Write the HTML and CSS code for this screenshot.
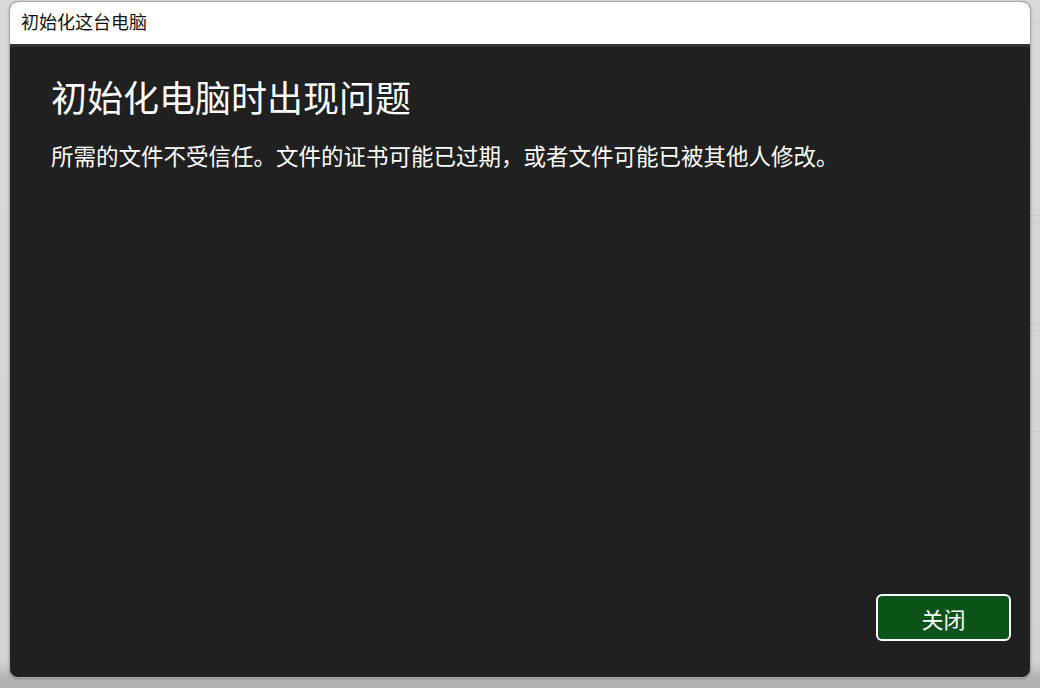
FILE: index.html
```html
<!DOCTYPE html>
<html lang="zh-Hans">
<head>
    <meta charset="UTF-8">
    <meta name="viewport" content="width=device-width, initial-scale=1.0">
    <title>初始化这台电脑</title>
    <link rel="stylesheet" href="styles.css">
</head>
<body>
    <div class="desk">
        <div class="window">
            <div class="title-bar">
                <span class="title">初始化这台电脑</span>
            </div>
            <div class="content">
                <h1>初始化电脑时出现问题</h1>
                <p>所需的文件不受信任。文件的证书可能已过期，或者文件可能已被其他人修改。</p>
                <div class="actions">
                    <button class="close-btn">关闭</button>
                </div>
            </div>
        </div>
    </div>
</body>
</html>
```

FILE: styles.css
```css
html, body {
    margin: 0;
    height: 100%;
}

body {
    font-family: "Noto Sans CJK SC", "Noto Sans", sans-serif;
    background:
        linear-gradient(#c9c9c9, #c9c9c9) right 0 top 22px / 9px 1px no-repeat,
        linear-gradient(#cacaca, #cacaca) right 0 top 215px / 9px 1px no-repeat,
        linear-gradient(#cacaca, #cacaca) right 0 top 222px / 9px 1px no-repeat,
        linear-gradient(#cacaca, #cacaca) right 0 top 323px / 9px 1px no-repeat,
        linear-gradient(#cacaca, #cacaca) right 0 top 330px / 9px 1px no-repeat,
        linear-gradient(#cacaca, #cacaca) right 0 top 431px / 9px 1px no-repeat,
        linear-gradient(to bottom, #d9d9d9 0, #d3d3d3 96%, #b4b4b4 98.5%, #b0b0b0 100%);
    overflow: hidden;
}

.desk {
    padding: 1px 0 0 9px;
}

.window {
    width: 1020px;
    height: 675px;
    border: 1px solid #a9a9a9;
    border-radius: 9px;
    background-color: #202020;
    display: flex;
    flex-direction: column;
    overflow: hidden;
    box-shadow: 0 1px 3px rgba(0, 0, 0, 0.25);
}

.title-bar {
    height: 40px;
    padding: 0 11px 2px;
    background-color: #ffffff;
    border-bottom: 3px solid #333333;
    display: flex;
    align-items: center;
}

.title {
    font-size: 18px;
    line-height: 1.3;
    color: #111;
}

.content {
    flex: 1;
    display: flex;
    flex-direction: column;
    padding: 26px 19px 36px 41px;
    color: #ffffff;
}

.content h1 {
    margin: 0;
    font-size: 36px;
    font-weight: normal;
    line-height: 1.3;
}

.content p {
    margin: 21px 0 0;
    font-size: 22.5px;
    line-height: 1.3;
}

.actions {
    margin-top: auto;
    display: flex;
    justify-content: flex-end;
}

.close-btn {
    width: 135px;
    height: 47px;
    border: 2px solid #ffffff;
    border-radius: 6px;
    background-color: #0c5318;
    color: #ffffff;
    font-family: "Noto Sans CJK SC", sans-serif;
    font-size: 22px;
    cursor: pointer;
}
```
